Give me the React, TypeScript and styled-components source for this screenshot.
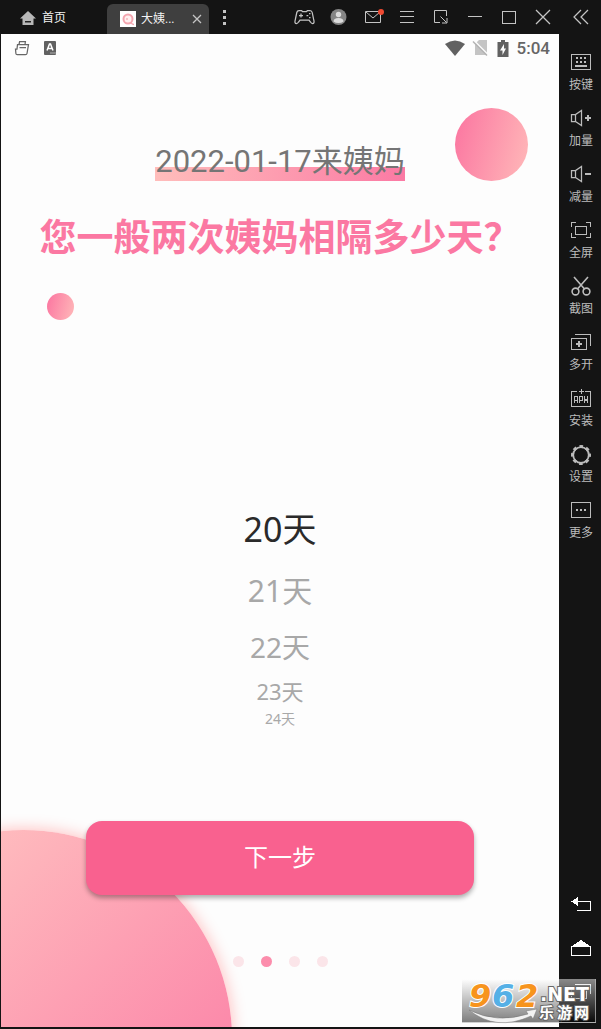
import React, { useState } from "react";
import styled, { createGlobalStyle } from "styled-components";

const GlobalStyle = createGlobalStyle`
  *, *::before, *::after { box-sizing: border-box; }
  body {
    margin: 0;
    background: #141414;
    font-family: Roboto, "Noto Sans CJK SC", sans-serif;
  }
  button { border: 0; padding: 0; background: none; color: inherit; font: inherit; cursor: pointer; }
  a { color: inherit; text-decoration: none; }
  svg { display: block; flex: none; overflow: visible; }
`;

const Window = styled.div`
  position: relative;
  display: flex;
  min-height: 100vh;
  padding: 0 0 2px 1px;
  background: #141414;
`;

const Main = styled.div`
  flex: 1;
  min-width: 0;
  display: flex;
  flex-direction: column;
`;

const TitleBar = styled.header`
  display: flex;
  align-items: center;
  height: 34px;
  color: #f2f2f2;
  font-size: 12px;
  line-height: 16px;
`;

const HomeLink = styled.a`
  display: flex;
  align-items: center;
  gap: 6px;
  width: 106px;
  padding: 2px 0 0 19px;
`;

const Tab = styled.div`
  display: flex;
  align-items: center;
  align-self: flex-end;
  gap: 5px;
  width: 102px;
  height: 30px;
  padding: 0 6px 0 13px;
  border-radius: 6px 6px 0 0;
  background: #3f3f3f;
`;

const TabTitle = styled.span`
  flex: 1;
  white-space: nowrap;
`;

const IconButton = styled.button<{ $width: number }>`
  display: flex;
  align-items: center;
  justify-content: center;
  flex: none;
  width: ${(p) => p.$width}px;
  height: 34px;
  color: #c4c4c4;
`;

const WindowControls = styled.div`
  display: flex;
  margin-left: auto;
`;

const Screen = styled.main`
  position: relative;
  flex: 1;
  display: flex;
  flex-direction: column;
  overflow: hidden;
  background: #fdfdfd;
`;

const StatusBar = styled.div`
  display: flex;
  align-items: center;
  justify-content: space-between;
  height: 28px;
  padding: 0 9px 0 13px;
  color: #666;
  font-size: 17px;
  font-weight: 500;
`;

const StatusGroup = styled.div<{ $gap: number }>`
  display: flex;
  align-items: center;
  gap: ${(p) => p.$gap}px;
`;

const CornerBubble = styled.div`
  position: absolute;
  top: 74px;
  right: 31px;
  width: 73px;
  height: 73px;
  border-radius: 50%;
  background: linear-gradient(105deg, #fb74a0, #ffb9b9);
`;

const SmallBubble = styled.div`
  width: 27px;
  height: 27px;
  margin: 30px 0 0 46px;
  border-radius: 50%;
  background: linear-gradient(105deg, #fb74a0, #ffb9b9);
`;

const GiantBubble = styled.div`
  position: absolute;
  left: -186px;
  bottom: -220px;
  width: 417px;
  height: 417px;
  border-radius: 50%;
  background: linear-gradient(135deg, #ffc6c2 10%, #fb7aa4 90%);
  box-shadow: 0 0 16px #ffb9b9;
`;

const DateLine = styled.p`
  align-self: center;
  margin: 81px 0 0;
  color: #757575;
  font-size: 31px;
  line-height: 38px;
  white-space: nowrap;
  background: linear-gradient(90deg, #ffbdbb, #fb7aa4) left bottom / 100% 14px no-repeat;
`;

const Question = styled.h1`
  margin: 34px 0 0;
  color: #fb78a2;
  font-size: 37px;
  font-weight: 700;
  line-height: 48px;
  text-align: center;
  white-space: nowrap;
`;

const Wheel = styled.div`
  display: flex;
  flex-direction: column;
  align-items: center;
  margin: 175px 0 40px;
  font-family: "Noto Sans", "Noto Sans CJK SC", sans-serif;
`;

const WheelItem = styled.button<{ $height: number; $size: number; $active: boolean }>`
  height: ${(p) => p.$height}px;
  padding: 0 24px;
  color: ${(p) => (p.$active ? "#2a2a2a" : "#a8a8a8")};
  font-size: ${(p) => p.$size}px;
  line-height: ${(p) => p.$height}px;
`;

const NextButton = styled.button`
  position: relative;
  height: 74px;
  margin: auto 85px 0;
  border-radius: 16px;
  background: #f9618f;
  box-shadow: 0 3px 5px rgba(0, 0, 0, 0.32);
  color: #fff;
  font-size: 24px;
  line-height: 32px;
`;

const Pager = styled.div`
  display: flex;
  justify-content: center;
  gap: 17px;
  padding: 61px 0 60px;
`;

const PagerDot = styled.span<{ $active: boolean }>`
  position: relative;
  width: 11px;
  height: 11px;
  border-radius: 50%;
  background: ${(p) => (p.$active ? "#fc8dac" : "#fbe5e9")};
`;

const Sidebar = styled.aside`
  display: flex;
  flex-direction: column;
  align-items: center;
  flex: none;
  width: 42px;
  padding: 0 0 26px 2px;
  color: #bcbcbc;
`;

const Tools = styled.nav`
  display: flex;
  flex-direction: column;
  gap: 15px;
  padding-top: 18px;
`;

const ToolButton = styled.button`
  display: flex;
  flex-direction: column;
  align-items: center;
  gap: 5px;
  font-size: 12px;
  line-height: 16px;
`;

const NavKeys = styled.nav`
  display: flex;
  flex-direction: column;
  gap: 23px;
  margin-top: auto;
  color: #fff;
`;

const Watermark = styled.div`
  position: absolute;
  right: 5px;
  bottom: 6px;
  width: 134px;
  height: 44px;
  background: linear-gradient(rgba(255, 255, 255, 0.5), rgba(0, 0, 0, 0.5));
  border: solid rgba(190, 190, 190, 0.7);
  border-width: 0 1px 1px 0;
`;

type GlyphProps = { children: React.ReactNode; w?: number; h?: number; crisp?: boolean };

const Glyph = ({ children, w = 20, h = 20, crisp = false }: GlyphProps) => (
  <svg
    width={w}
    height={h}
    viewBox={`0 0 ${w} ${h}`}
    fill="none"
    stroke="currentColor"
    strokeWidth={crisp ? 1 : 1.25}
    shapeRendering={crisp ? "crispEdges" : "auto"}
    aria-hidden="true"
  >
    {children}
  </svg>
);

const controls = [
  {
    label: "游戏手柄",
    icon: (
      <Glyph>
        <path d="M5 3.500h2.500l1 1h4l1-1H16q1.800 0 2.200 2L20 14q.4 2.500-1.500 2.500-1.200 0-2-1.500l-1.500-2H6l-1.500 2q-.8 1.500-2 1.500Q.6 16.500 1 14l1.800-8.500q.4-2 2.200-2z" />
        <path d="M5 8.500h4M7 6.500v4" />
        <path d="M12.500 8.500h1.800M15 6.500h1.500M15 10.500h1.500" />
      </Glyph>
    ),
  },
  {
    label: "账户",
    icon: (
      <Glyph>
        <circle cx="10.500" cy="10" r="8" fill="#858585" stroke="none" />
        <circle cx="10.500" cy="7.500" r="2.700" fill="#dcdcdc" stroke="none" />
        <path d="M5.500 14.500q0-3.500 5-3.500t5 3.500q-2 1.500-5 1.500t-5-1.500z" fill="#dcdcdc" stroke="none" />
      </Glyph>
    ),
  },
  {
    label: "消息",
    icon: (
      <Glyph>
        <path d="M3.500 4.500h15v11h-15zM4 5l7 6 7-6" strokeWidth="1" />
        <circle cx="19" cy="5" r="3" fill="#f04a32" stroke="none" />
      </Glyph>
    ),
  },
  { label: "菜单", icon: <Glyph crisp><path d="M4 4.500h14M4 9.500h14M4 15.500h14" /></Glyph> },
  {
    label: "缩放",
    icon: (
      <Glyph>
        <path d="M10 15.500H4.500v-12h12V9M10.500 9.500l6 6M17 11v5h-5" strokeWidth="1" />
      </Glyph>
    ),
  },
  { label: "最小化", icon: <Glyph crisp><path d="M4 9.500h14" /></Glyph> },
  { label: "最大化", icon: <Glyph crisp><path d="M4.500 4.500h13v12h-13z" /></Glyph> },
  { label: "关闭", icon: <Glyph><path d="M4 3l14 14M18 3L4 17" /></Glyph> },
];

const tools = [
  {
    label: "按键",
    icon: (
      <Glyph crisp>
        <path d="M.5 2.500h19v15H.5z" />
        <path d="M5 6h2M9 6h2M13 6h2M5 10h2M9 10h2M13 10h2" strokeWidth="2" />
        <path d="M4 14h12" strokeWidth="2" />
      </Glyph>
    ),
  },
  {
    label: "加量",
    icon: (
      <Glyph>
        <path d="M4.500 6.500v7H.5v-7h4l6-4v15l-6-4" />
        <path d="M14 10h6M17 7v6" strokeWidth="2" />
      </Glyph>
    ),
  },
  {
    label: "减量",
    icon: (
      <Glyph>
        <path d="M4.500 6.500v7H.5v-7h4l6-4v15l-6-4" />
        <path d="M14 10h6" strokeWidth="2" />
      </Glyph>
    ),
  },
  {
    label: "全屏",
    icon: (
      <Glyph crisp>
        <path d="M4.500 6.500h11v8h-11zM.5 7V2.500H5M15 2.500h4.500V7M19.500 13v4.500H15M5 17.500H.5V13" />
      </Glyph>
    ),
  },
  {
    label: "截图",
    icon: (
      <Glyph>
        <path d="M3 1l10.500 12M17 1L6.500 13" strokeWidth="1.600" />
        <circle cx="4.500" cy="15.500" r="3.400" strokeWidth="1.600" />
        <circle cx="15.500" cy="15.500" r="3.400" strokeWidth="1.600" />
      </Glyph>
    ),
  },
  {
    label: "多开",
    icon: (
      <Glyph crisp>
        <path d="M.5 6.500h15v11H.5zM4 2.500h15.500V14" />
        <path d="M5 12h6M8 9v6" strokeWidth="2" />
      </Glyph>
    ),
  },
  {
    label: "安装",
    icon: (
      <Glyph crisp>
        <path d="M6 3.500H.5v15h19v-15H14M10.500 1v5M8 3.500h5" />
        <path d="M3.500 15v-6.500h3V15M3.500 12.500h3M8.500 15v-6.500h3v4h-3M13.500 8v7M16.500 8v3l-3 1 3 1v2" />
      </Glyph>
    ),
  },
  {
    label: "设置",
    icon: (
      <Glyph>
        <circle cx="10" cy="11" r="7.800" strokeWidth="1.800" />
        <circle cx="10" cy="11" r="8.500" strokeWidth="3" strokeDasharray="3.500 3.175" strokeDashoffset="1.750" />
      </Glyph>
    ),
  },
  {
    label: "更多",
    icon: (
      <Glyph crisp>
        <path d="M.5 2.500h19v15H.5z" />
        <path d="M5 10h2M9 10h2M13 10h2" strokeWidth="2" />
      </Glyph>
    ),
  },
];

const navKeys = [
  {
    label: "返回",
    icon: (
      <Glyph crisp>
        <path d="M6 6.500h13.500v9H6" />
        <path d="M0 6.500L7 2v9z" fill="currentColor" stroke="none" />
      </Glyph>
    ),
  },
  {
    label: "主页",
    icon: (
      <Glyph crisp>
        <path d="M.5 8.500h19v9H.5z" />
        <path d="M0 8.500L10 2l10 6.500z" fill="currentColor" stroke="none" />
      </Glyph>
    ),
  },
  {
    label: "最近任务",
    icon: <Glyph crisp><path d="M4 3.500h15.500V13M.5 7.500h15v10H.5z" /></Glyph>,
  },
];

const days = [
  { value: 20, height: 68, size: 34 },
  { value: 21, height: 56, size: 30 },
  { value: 22, height: 56, size: 28 },
  { value: 23, height: 32, size: 22 },
  { value: 24, height: 24, size: 14 },
];

export default function App() {
  const [selected, setSelected] = useState(20);

  return (
    <>
      <GlobalStyle />
      <Window>
        <Main>
          <TitleBar>
            <HomeLink href="#home">
              <svg width="16" height="16" viewBox="0 0 16 16" aria-hidden="true">
                <path d="M8 1L0 8.500h2.500V15h11V8.500H16z" fill="#b8b8b8" />
                <path d="M5 11h6v1.500H5z" fill="#222" />
              </svg>
              首页
            </HomeLink>
            <Tab>
              <svg width="16" height="16" viewBox="0 0 16 16" aria-hidden="true">
                <path d="M0 0h16v16H0z" fill="#fff" />
                <circle cx="8" cy="8" r="4.500" fill="#fff0f0" stroke="#f4a6b0" strokeWidth="2" />
                <path d="M11 11.500q1 2 3 2" stroke="#f4a6b0" strokeWidth="1.500" fill="none" />
                <circle cx="7" cy="8" r="1" fill="#f4b6bd" />
              </svg>
              <TabTitle>大姨...</TabTitle>
              <IconButton $width={12} aria-label="关闭标签">
                <Glyph w={8} h={8}><path d="M0 0l8 8M8 0L0 8" /></Glyph>
              </IconButton>
            </Tab>
            <IconButton $width={30} aria-label="更多标签">
              <Glyph w={4} h={16} crisp>
                <path d="M2 1v3M2 7v3M2 13v3" strokeWidth="3" />
              </Glyph>
            </IconButton>
            <WindowControls>
              {controls.map((c) => (
                <IconButton key={c.label} $width={34} aria-label={c.label}>
                  {c.icon}
                </IconButton>
              ))}
            </WindowControls>
          </TitleBar>

          <Screen>
            <GiantBubble />
            <CornerBubble />
            <StatusBar>
              <StatusGroup $gap={14}>
                <Glyph w={16} h={16}>
                  <path d="M5 4.500l.6-2.800h5.800l-.4 2.800M3.500 4.500h11l-1.500 9q-.2 1.200-1.500 1.200H3.200q-1.200 0-1.300-1.200L1.500 9H3zM5.500 7.500h6.500" />
                </Glyph>
                <svg width="12" height="14" viewBox="0 0 12 14" aria-hidden="true">
                  <rect width="12" height="14" rx="1" fill="#616161" />
                  <path d="M3 9.500L5.500 3h1L9 9.500M4 7.500h4" fill="none" stroke="#fff" strokeWidth="1.500" />
                  <path d="M6.500 12h1M8.500 12h1M10.500 12h1" stroke="#fff" />
                </svg>
              </StatusGroup>
              <StatusGroup $gap={8}>
                <svg width="20" height="16" viewBox="0 0 20 16" aria-hidden="true">
                  <path d="M10 16L0 4q10-7 20 0z" fill="#616161" />
                </svg>
                <svg width="16" height="16" viewBox="0 0 16 16" aria-hidden="true">
                  <path d="M6 0h8v15H2V4z" fill="#c4c4c4" />
                  <path d="M1 0.500l15 15" stroke="#fdfdfd" strokeWidth="1.500" />
                  <path d="M0 1.500l14 14" stroke="#b4b4b4" strokeWidth="1.500" />
                </svg>
                <svg width="12" height="17" viewBox="0 0 12 17" aria-hidden="true">
                  <path d="M4 0h4v2h3.500v15H.5V2H4z" fill="#616161" />
                  <path d="M7 4L3 10.500h2.500V15L9 8.500H7z" fill="#fdfdfd" />
                </svg>
                <span>5:04</span>
              </StatusGroup>
            </StatusBar>

            <DateLine>2022-01-17来姨妈</DateLine>
            <Question>您一般两次姨妈相隔多少天？</Question>
            <SmallBubble />

            <Wheel role="listbox" aria-label="间隔天数">
              {days.map((d) => (
                <WheelItem
                  key={d.value}
                  role="option"
                  aria-selected={d.value === selected}
                  $height={d.height}
                  $size={d.size}
                  $active={d.value === selected}
                  onClick={() => setSelected(d.value)}
                >
                  {d.value}天
                </WheelItem>
              ))}
            </Wheel>

            <NextButton>下一步</NextButton>
            <Pager>
              {[0, 1, 2, 3].map((i) => (
                <PagerDot key={i} $active={i === 1} />
              ))}
            </Pager>
          </Screen>
        </Main>

        <Sidebar>
          <IconButton $width={34} aria-label="收起">
            <Glyph><path d="M10 3l-7 7 7 7M17 3l-7 7 7 7" /></Glyph>
          </IconButton>
          <Tools>
            {tools.map((t) => (
              <ToolButton key={t.label}>
                {t.icon}
                {t.label}
              </ToolButton>
            ))}
          </Tools>
          <NavKeys>
            {navKeys.map((k) => (
              <button key={k.label} aria-label={k.label}>
                {k.icon}
              </button>
            ))}
          </NavKeys>
        </Sidebar>

        <Watermark>
          <svg width="134" height="44" viewBox="0 0 134 44" fontFamily="'DejaVu Sans', 'Noto Sans CJK SC', sans-serif" fontWeight="700">
            <path d="M7 31Q35 45 66 35L64 32L75 30L71 40L69 37Q34 53 7 31z" fill="#f2f2f2" stroke="#777" strokeWidth="0.500" />
            <g fontSize="32" fontStyle="italic" stroke="#fff" strokeWidth="2" paintOrder="stroke">
              <text x="7" y="28" fill="#f7941d">9</text>
              <text x="30" y="28" fill="#55b0e6">6</text>
              <text x="54" y="28" fill="#f7941d">2</text>
            </g>
            <g fill="#fff" stroke="#666" strokeWidth="2" paintOrder="stroke">
              <text x="78" y="22" fontSize="19">.NET</text>
              <text x="77" y="39" fontSize="15">乐</text>
              <text x="95" y="39" fontSize="15">游</text>
              <text x="112" y="39" fontSize="15">网</text>
            </g>
          </svg>
        </Watermark>
      </Window>
    </>
  );
}
